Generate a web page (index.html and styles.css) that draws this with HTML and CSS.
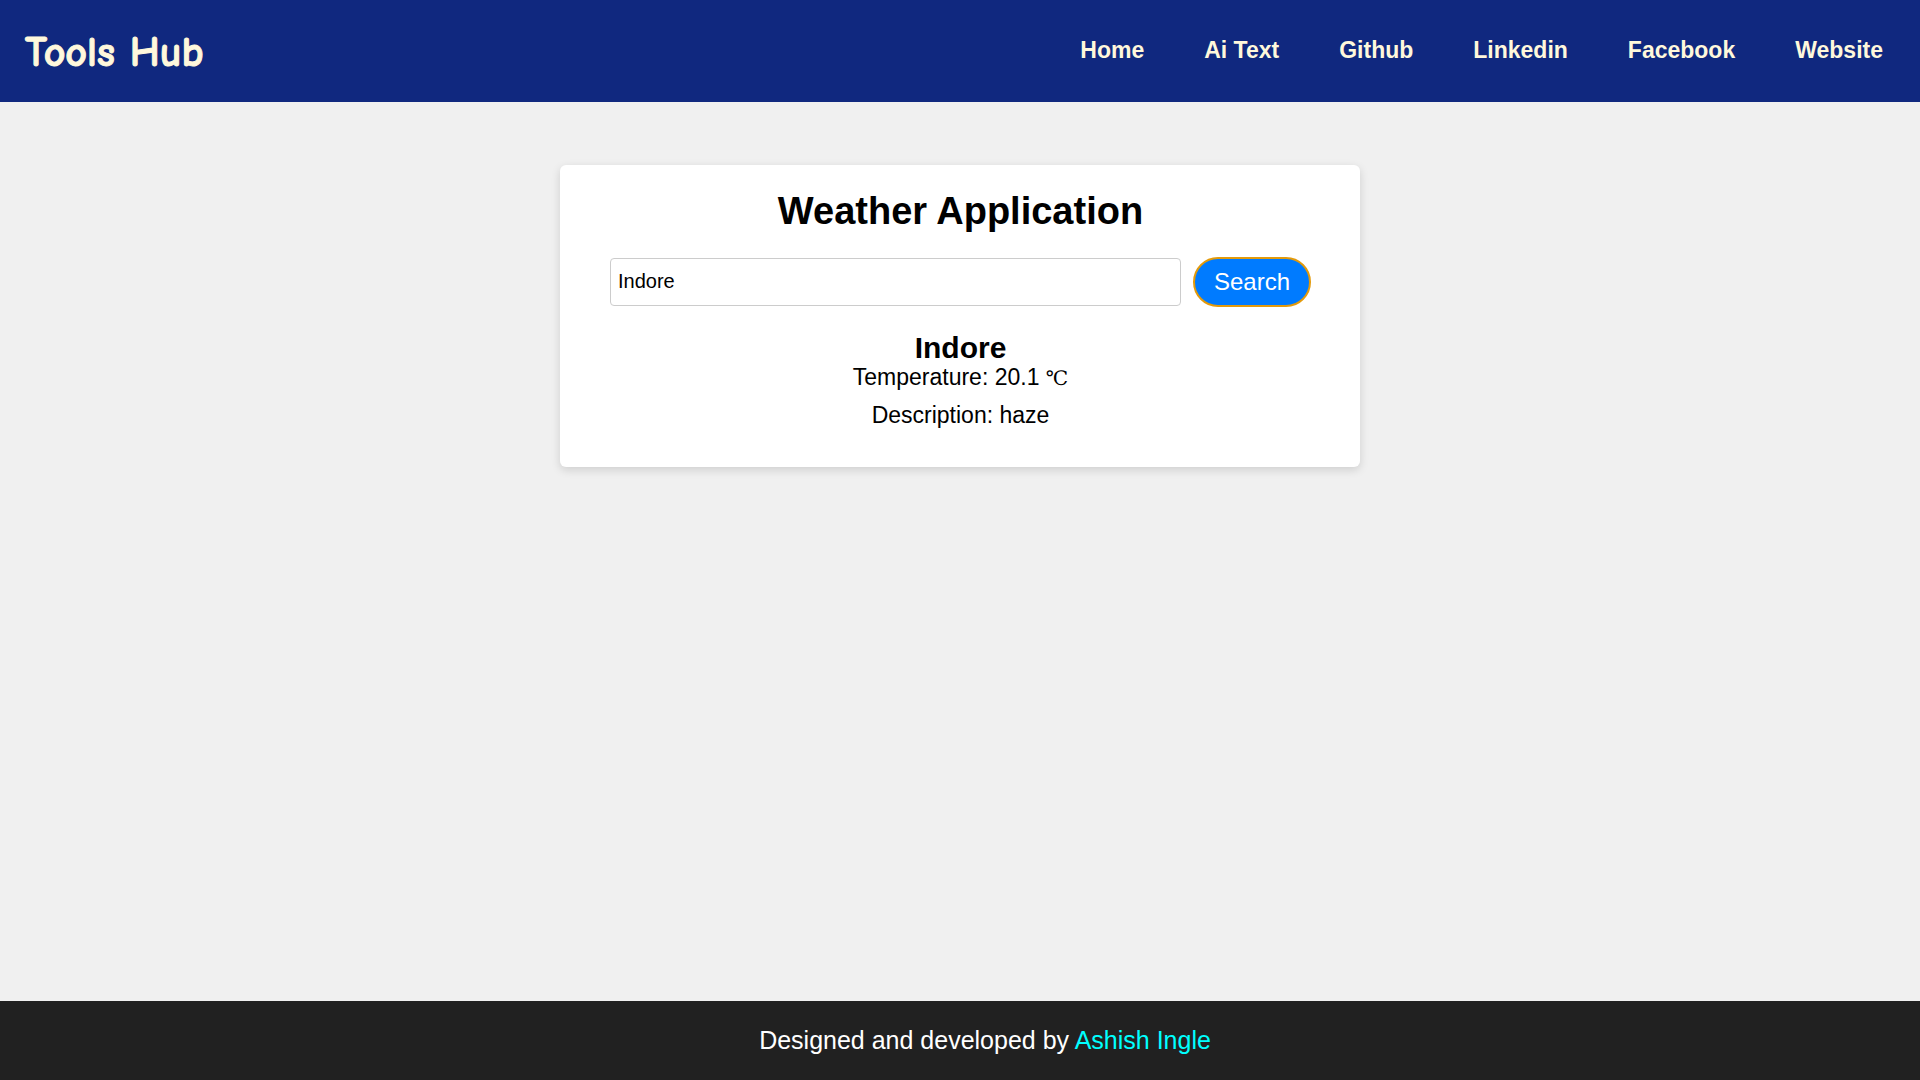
FILE: index.html
```html
<!DOCTYPE html>
<html lang="en">
<head>
  <meta charset="utf-8">
  <meta name="viewport" content="width=device-width, initial-scale=1">
  <title>Tools Hub - Weather Application</title>
  <link rel="stylesheet" href="styles.css">
</head>
<body>
  <header class="header">
    <div class="logo">Tools Hub</div>
    <nav class="nav">
      <a href="#">Home</a>
      <a href="#">Ai Text</a>
      <a href="#">Github</a>
      <a href="#">Linkedin</a>
      <a href="#">Facebook</a>
      <a href="#">Website</a>
    </nav>
  </header>
  <main class="main">
    <section class="card">
      <h1 class="title">Weather Application</h1>
      <form class="search">
        <input class="search-input" type="text" value="Indore" aria-label="City">
        <button class="search-button" type="button">Search</button>
      </form>
      <div class="result">
        <h2 class="city">Indore</h2>
        <p class="detail">Temperature: 20.1 <span class="unit">℃</span></p>
        <p class="detail">Description: haze</p>
      </div>
    </section>
  </main>
  <footer class="footer">
    <p>Designed and developed by <a href="#">Ashish Ingle</a></p>
  </footer>
</body>
</html>
```
FILE: styles.css
```css
* {
  box-sizing: border-box;
  margin: 0;
  padding: 0;
}

body {
  display: flex;
  flex-direction: column;
  min-height: 100vh;
  background: #f0f0f0;
  color: #000;
  font-family: "Liberation Sans", Arial, sans-serif;
}

.header {
  display: flex;
  justify-content: space-between;
  padding: 27px 37px 23px 25px;
  background: #10287f;
  color: cornsilk;
}

.logo {
  font-family: "Comic Neue", Lato, sans-serif;
  font-size: 42px;
  font-weight: 700;
  line-height: 52px;
  -webkit-text-stroke: 1px cornsilk;
}

.nav {
  display: flex;
  gap: 60px;
  font-size: 23px;
  font-weight: 700;
  line-height: 46px;
}

.nav a {
  color: inherit;
  text-decoration: none;
}

.main {
  flex: 1;
  padding: 63px 20px;
}

.card {
  max-width: 800px;
  margin: 0 auto;
  padding: 24px 49px 27px 50px;
  border-radius: 6px;
  background: #fff;
  box-shadow: 0 3px 10px rgba(0, 0, 0, 0.14);
  text-align: center;
}

.title {
  font-size: 38px;
  line-height: 44px;
}

.search {
  display: flex;
  align-items: center;
  gap: 12px;
  margin: 24px 0;
}

.search-input {
  flex: 1;
  min-width: 0;
  height: 48px;
  padding: 0 7px 2px;
  border: 1px solid #ccc;
  border-radius: 4px;
  color: #000;
  font: 20px "Liberation Sans", Arial, sans-serif;
}

.search-button {
  padding: 9px 19px;
  border: 2px solid #e39a0b;
  border-radius: 25px;
  background: #007bff;
  color: #fff;
  font: 24px/28px "Liberation Sans", Arial, sans-serif;
}

.city {
  font-size: 30px;
  line-height: 33px;
}

.detail {
  margin-bottom: 12px;
  font-size: 23px;
  line-height: 26px;
}

.unit {
  font-family: "DejaVu Serif", serif;
  font-size: 20px;
  line-height: 20px;
}

.footer {
  padding: 25px 0 26px 50px;
  background: #212121;
  color: #fff;
  font-size: 25px;
  line-height: 28px;
  text-align: center;
}

.footer a {
  color: aqua;
  text-decoration: none;
}
```
